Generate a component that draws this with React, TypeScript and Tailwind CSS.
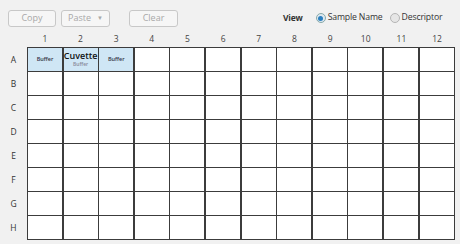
import React from "react";

const cols = Array.from({ length: 12 }, (_, i) => i + 1);
const rows = ["A", "B", "C", "D", "E", "F", "G", "H"];

export default function App() {
  return (
    <div
      className="w-[460px] h-[244px] bg-[#f1f1f1] relative overflow-hidden"
      style={{ fontFamily: '"Open Sans", "Noto Sans", sans-serif' }}
    >
      <div className="flex items-center h-[34px] pl-[8px] pt-[2px]">
        <div className="w-[48px] h-[17px] border border-[#c8c8c8] rounded-[3px] bg-[#f6f6f6] flex items-center justify-center text-[9px] text-[#a8a8a8]">
          Copy
        </div>
        <div className="ml-[5px] w-[49px] h-[17px] border border-[#c8c8c8] rounded-[3px] bg-[#f6f6f6] flex items-center justify-center text-[9px] text-[#a8a8a8] gap-[6px]">
          <span>Paste</span>
          <span className="text-[6px]">▼</span>
        </div>
        <div className="ml-[19px] w-[49px] h-[17px] border border-[#c8c8c8] rounded-[3px] bg-[#f6f6f6] flex items-center justify-center text-[9px] text-[#a8a8a8]">
          Clear
        </div>
        <div className="ml-[105px] text-[8.5px] font-bold text-[#333] tracking-[-0.2px]">View</div>
        <div className="ml-[13px] w-[10px] h-[10px] rounded-full border border-[#8aa] bg-[#dde8f0] flex items-center justify-center">
          <div className="w-[5px] h-[5px] rounded-full bg-[#2b7fc0]" />
        </div>
        <div className="ml-[2px] text-[8.7px] text-[#333] tracking-[-0.15px]">Sample Name</div>
        <div className="ml-[7px] w-[10px] h-[10px] rounded-full border border-[#b5b5b5] bg-[#e6e6e6]" />
        <div className="ml-[2px] text-[8.7px] text-[#333] tracking-[-0.15px]">Descriptor</div>
      </div>
      <div className="flex">
        <div className="w-[27px] flex flex-col pt-[14px]">
          {rows.map((r) => (
            <div key={r} className="h-[24px] flex items-center justify-center text-[8.5px] text-[#333]">
              {r}
            </div>
          ))}
        </div>
        <div className="flex flex-col">
          <div className="flex h-[13px]">
            {cols.map((c) => (
              <div key={c} className="w-[35.67px] flex items-start justify-center text-[8.5px] leading-[10px] text-[#444]">
                {c}
              </div>
            ))}
          </div>
          <div
            className="grid border-[1.5px] border-[#3c3c3c] bg-[#3c3c3c] gap-[1.5px]"
            style={{ gridTemplateColumns: "repeat(12, 34.1px)", gridTemplateRows: "repeat(8, 22.5px)" }}
          >
            {rows.map((r, ri) =>
              cols.map((c) => {
                const buffer = ri === 0 && c <= 3;
                return (
                  <div
                    key={r + c}
                    className={
                      "relative flex items-center justify-center " +
                      (buffer ? "bg-[#cfe6f5]" : "bg-white")
                    }
                  >
                    {buffer && c !== 2 && (
                      <span className="text-[5.5px] font-semibold text-[#334] leading-none">Buffer</span>
                    )}
                    {buffer && c === 2 && (
                      <div className="flex flex-col items-center">
                        <span className="text-[9px] font-semibold text-[#111] leading-[11px]">Cuvette</span>
                        <span className="text-[5px] font-semibold text-[#889] leading-[7px]">Buffer</span>
                      </div>
                    )}
                  </div>
                );
              })
            )}
          </div>
        </div>
      </div>
    </div>
  );
}
